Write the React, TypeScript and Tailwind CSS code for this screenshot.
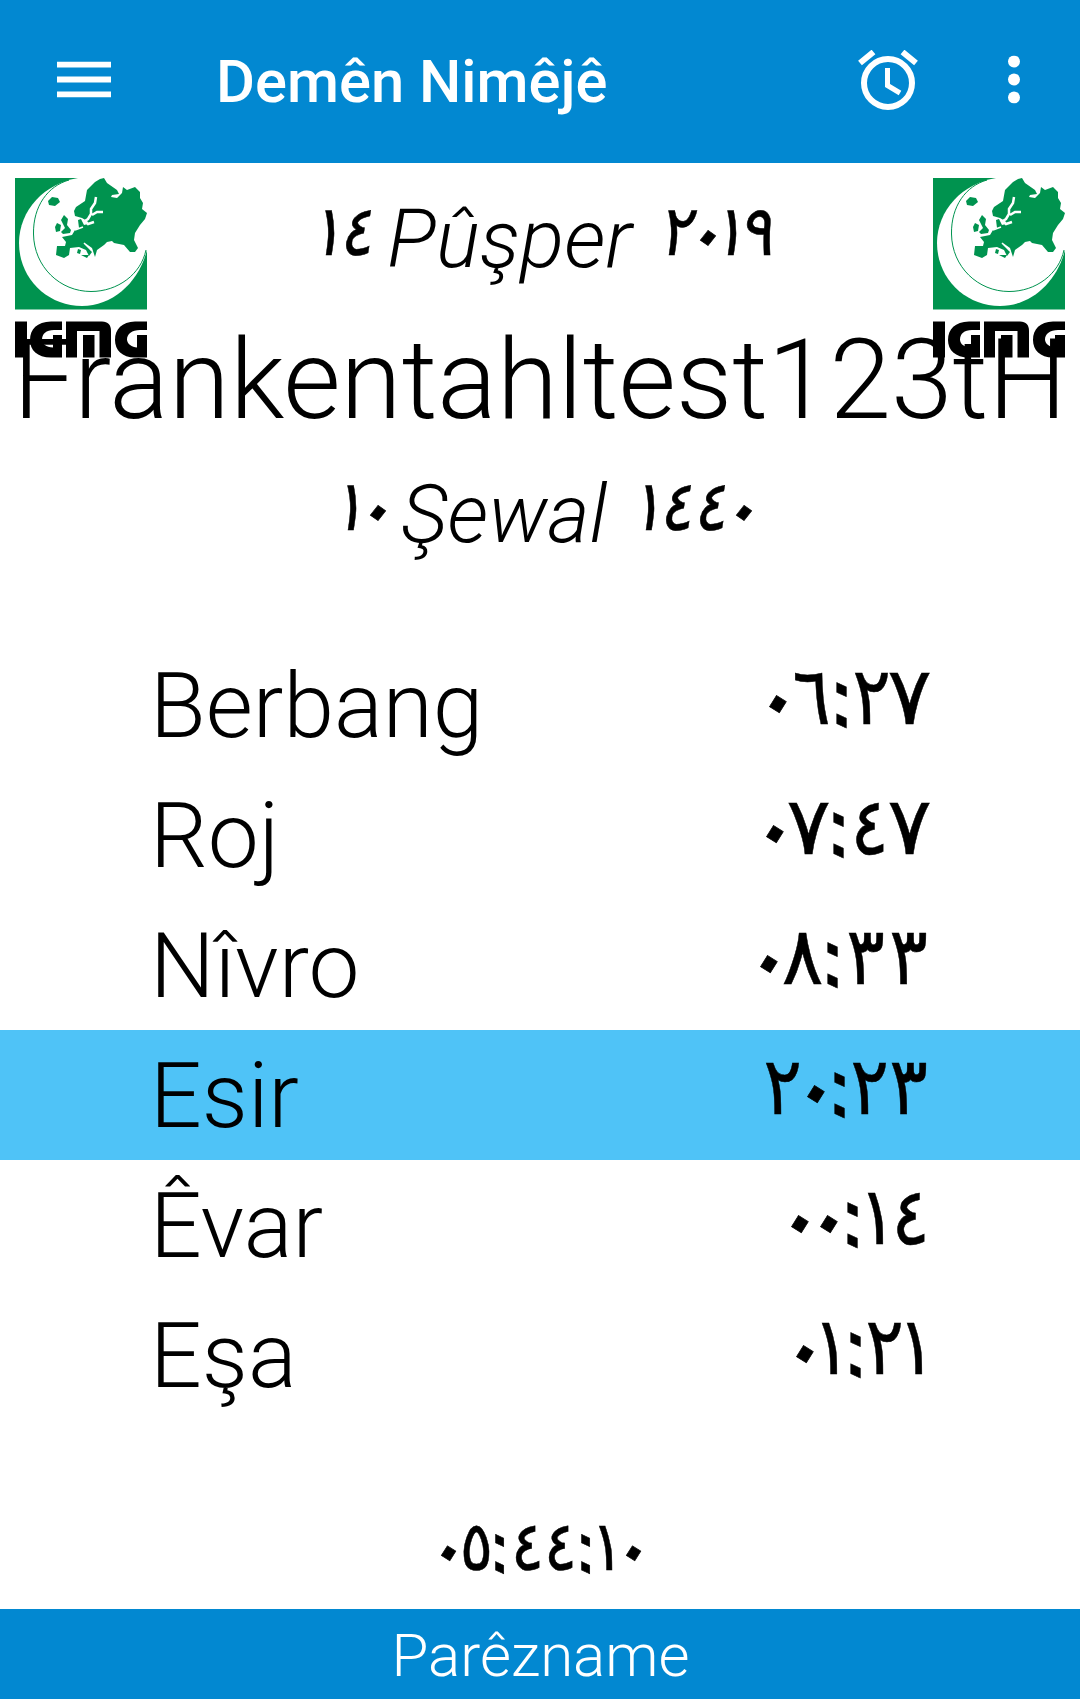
import { clsx } from "clsx";

/* Advance widths of the Arabic-Indic digits, in em. */
const ADVANCE: Record<string, number> = {
  "٠": 0.37, "١": 0.34, "٢": 0.45, "٣": 0.535, "٤": 0.485, "٥": 0.45,
  "٦": 0.5, "٧": 0.51, "٨": 0.51, "٩": 0.42, ":": 0.27,
};

function Digits({ value, italic = false, className }: { value: string; italic?: boolean; className: string }) {
  return (
    <span
      dir="ltr"
      className={clsx(
        "flex font-['DejaVu_Sans',sans-serif] leading-none [-webkit-text-stroke:0.500px_currentColor]",
        italic && "-skew-x-[9deg]",
        className,
      )}
    >
      {[...value].map((c, i) => (
        <span key={i} className="flex justify-center" style={{ width: `${ADVANCE[c]}em` }}>
          <span
            className={clsx(
              "block shrink-0",
              c === "٠" && "origin-[50%_58%] translate-y-[3px] rotate-[32deg] scale-[1.35]",
              c === ":" && "-translate-x-px translate-y-[2px] skew-y-[28deg] scale-x-[1.15]",
              c === "٧" && "scale-x-[1.04]",
              c === "٨" && "scale-x-[0.98]",
              "١٢٣٤٥٦٩".includes(c) && "scale-x-[0.9]",
            )}
          >
            {c}
          </span>
        </span>
      ))}
    </span>
  );
}

function Logo() {
  return (
    <svg viewBox="0 0 132 181" className="h-[181px] w-[132px]">
      <path fill="#00934f" d="M0 0H132V131.500H0z" />
      <path fill="#fff" d="M63 0H132V72C124 104 98 128 67 128C32 128 4 100 4 65C4 32 30 5 63 0z" />
      <path fill="none" stroke="#00934f" strokeWidth="1" d="M54 2C33 8 18 28 18.500 56C19 89 45 113.500 76 113.500C103 113.500 126 96 131 72" />
      <path fill="#00934f" d="M80 4L85 1L89 0L92 5L102 12L104 16L97 17L96 19L102 20L107 15L108 9L112 12L120 9L125 14L125 20L128 25L127 31L132 35L130 41L125 47L120 55L119 62L123 70L120 74L115 74L109 67L99 65L97 63L92 64L89 67L82 72L80 79L77 70L70 65L77 74L74 78L71 72L64 69L55 70L54 77L49 80L41 77L42 68L50 68L51 64L47 59L57 57L60 52L64 50L63 42L66 41L69 47L73 46L72 43L67 40L60 38L59 33L61 29L70 23L72 12z" />
      <path fill="none" stroke="#fff" strokeWidth="2.500" d="M81 19L80 25L76 31V36L73 41L70 43L73 46L79 44M77 37L82 34H88" />
      <path fill="none" stroke="#fff" strokeWidth="1.500" d="M60 52L68 49M69 65L77 73" />
      <path fill="#00934f" d="M37 19L43 20L45 24L40 28L34 27L33 23zM49 37L53 41L52 47L56 52L55 55L48 56L46 54L50 50L46 42zM42 45L46 47L45 53L41 54L40 49zM63 71L66 72L65 76L62 75zM66 77L74 77L72 80z" />
      <g fill="#000">
        <path d="M0 143.500H12V179.500H0z" />
        <path d="M47 143.500V152H39C31 152 27 156 27 161.500C27 166 31 169 38 169.500V157H47V179.500H36C22 179.500 15 172 15 162C15 151 22 144 36 143.500z" />
        <path d="M51 179.500V143.500H87C93 143.500 96 147 96 153V179.500H84.500V153H62V179.500z" />
        <path d="M68 157H79.500V179.500H68z" />
        <path d="M132 143.500V152H125C117 152 112 156 112 161.500C112 166 117 169 122 169.500V157H132V179.500H120C107 179.500 100 172 100 162C100 151 107 144 120 143.500z" />
      </g>
    </svg>
  );
}

const TIMES = [
  { name: "Berbang", time: "٠٦:٢٧" },
  { name: "Roj", time: "٠٧:٤٧" },
  { name: "Nîvro", time: "٠٨:٣٣" },
  { name: "Esir", time: "٢٠:٢٣", active: true },
  { name: "Êvar", time: "٠٠:١٤" },
  { name: "Eşa", time: "٠١:٢١" },
];

export default function App() {
  return (
    <div className="flex h-[1699px] w-[1080px] flex-col overflow-hidden bg-white font-[Roboto,sans-serif] text-black">
      <header className="flex h-[163px] shrink-0 items-center bg-[#0288d1] text-white">
        <svg viewBox="0 0 54 36" className="ml-[57px] h-9 w-[54px] -translate-y-[2.500px]" fill="currentColor">
          <path d="M0 0h54v6H0zM0 15h54v6H0zM0 30h54v6H0z" />
        </svg>
        <h1 className="ml-[105px] translate-y-px text-[59.700px] leading-none font-medium whitespace-nowrap">Demên Nimêjê</h1>
        <svg viewBox="0 0 60 60" className="ml-auto h-[60px] w-[60px] -translate-y-[2px]" fill="none" stroke="currentColor">
          <circle cx="30" cy="33" r="24" strokeWidth="6" />
          <path strokeWidth="5" d="M29.500 18V35.500L42 43" />
          <path strokeWidth="6" d="M2 13L15.500 2M44.500 2L58 13" />
        </svg>
        <svg viewBox="0 0 12 48" className="mr-[60px] ml-[90px] h-12 w-3 -translate-y-[2.500px]" fill="currentColor">
          <circle cx="6" cy="6" r="6" />
          <circle cx="6" cy="24" r="6" />
          <circle cx="6" cy="42" r="6" />
        </svg>
      </header>

      <section className="relative flex h-[477px] shrink-0 flex-col items-center">
        <div className="absolute inset-x-[15px] top-[15px] flex justify-between">
          <Logo />
          <Logo />
        </div>
        <div className="mt-[20px] flex h-[112px] items-center pl-[14px] font-light">
          <Digits value="١٤" italic className="mr-2.5 -translate-y-[8px] text-[70px]" />
          <span className="text-[82px] leading-none italic">Pûşper</span>
          <Digits value="٢٠١٩" italic className="ml-8 -translate-y-[8px] text-[70px]" />
        </div>
        <h2 className="mt-[15px] text-[111px] leading-[140px] font-light whitespace-nowrap">Frankentahltest123tH</h2>
        <div className="mt-[8px] flex h-[112px] items-center pl-[18px] font-light">
          <Digits value="١٠" italic className="mr-2.5 -translate-y-[8px] text-[70px]" />
          <span className="text-[81px] leading-none italic">Şewal</span>
          <Digits value="١٤٤٠" italic className="ml-8 -translate-y-[8px] text-[70px]" />
        </div>
      </section>

      <ul>
        {TIMES.map(({ name, time, active }) => (
          <li key={name} className={clsx("flex h-[130px] items-center justify-between pr-[150px] pl-[150px]", active && "bg-[#4fc3f7]")}>
            <span className="translate-y-px text-[91px] leading-none font-light">{name}</span>
            <Digits value={time} className="-translate-y-[8px] text-[80px]" />
          </li>
        ))}
      </ul>

      <div className="flex grow items-end justify-center pb-[28px]">
        <Digits value="٠٥:٤٤:١٠" className="text-[69px]" />
      </div>
      <footer className="flex h-[90px] shrink-0 items-center justify-center bg-[#0288d1] pt-1 pl-px text-[60px] leading-none font-light text-white">
        Parêzname
      </footer>
    </div>
  );
}
